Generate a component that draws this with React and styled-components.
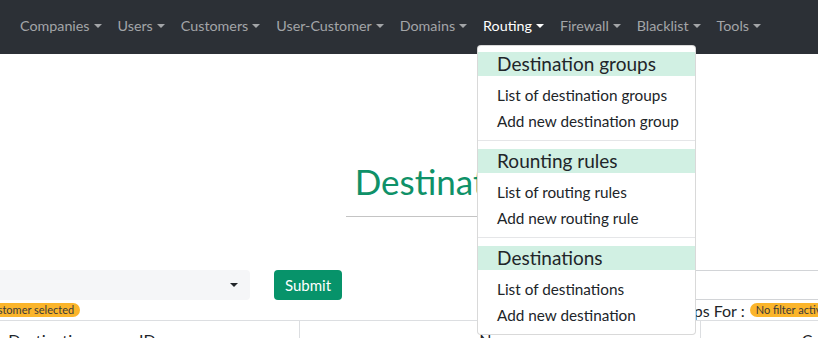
import React from 'react'
import styled, { createGlobalStyle } from 'styled-components'

const GlobalStyle = createGlobalStyle`
  body {
    margin: 0;
    background: #fff;
    font-family: Lato, "Open Sans", sans-serif;
    color: #212529;
    overflow: hidden;
  }
`

const Navbar = styled.nav`
  height: 54px;
  background: #2c3036;
  display: flex;
  align-items: flex-start;
  padding: 0 12px;
`

const NavItem = styled.div`
  position: relative;
`

const NavLink = styled.a`
  display: flex;
  align-items: center;
  height: 50px;
  padding: 0 8px;
  font-size: 14.3px;
  white-space: nowrap;
  color: ${p => (p.$active ? '#ffffff' : '#a3a5a8')};
  text-decoration: none;
  cursor: pointer;

  &::after {
    content: '';
    display: inline-block;
    margin-left: 4px;
    margin-top: 2px;
    border-top: 4px solid currentColor;
    border-left: 4px solid transparent;
    border-right: 4px solid transparent;
  }
`

const Menu = styled.div`
  position: absolute;
  top: 45px;
  left: 2px;
  width: 217px;
  background: #fff;
  border: 1px solid rgba(0, 0, 0, 0.15);
  border-radius: 4px;
  padding: 6px 0;
  z-index: 10;
`

const MenuHeader = styled.div`
  background: #d1f0e3;
  height: 24px;
  line-height: 24px;
  padding-left: 19px;
  font-size: 19px;
  color: #212529;
  margin-bottom: 6px;
  white-space: nowrap;
`

const MenuItem = styled.a`
  display: block;
  height: 26px;
  line-height: 26px;
  padding-left: 19px;
  font-size: 15.3px;
  color: #212529;
  white-space: nowrap;
`

const Divider = styled.hr`
  border: 0;
  border-top: 1px solid #e5e6e8;
  margin: 6px 0 8px;
`

const Content = styled.main`
  margin-left: -135px;
  width: 1272px;
`

const TitleWrap = styled.div`
  padding-top: 104px;
  text-align: center;
`

const Title = styled.h1`
  display: inline-block;
  margin: 0;
  padding: 0 9px 12px;
  font-size: 35px;
  font-weight: 400;
  line-height: 46px;
  color: #0f9168;
  border-bottom: 1px solid #c4c4c4;
`

const FormRow = styled.div`
  display: flex;
  align-items: center;
  margin-top: 53px;
  padding-left: 98px;
  height: 30px;
`

const Select = styled.div`
  width: 287px;
  height: 30px;
  background: #f5f6f8;
  border-radius: 4px;
  display: flex;
  align-items: center;
  justify-content: flex-end;
  padding-right: 12px;
  box-sizing: border-box;

  &::after {
    content: '';
    border-top: 4px solid #212529;
    border-left: 4px solid transparent;
    border-right: 4px solid transparent;
  }
`

const Button = styled.button`
  margin-left: 24px;
  width: 68px;
  height: 30px;
  border: 0;
  border-radius: 4px;
  background: #07936a;
  color: #fff;
  font-family: inherit;
  font-size: 15px;
`

const Search = styled.div`
  margin-left: 218px;
  flex: 1;
  height: 30px;
  box-sizing: border-box;
  border-top: 1px solid #d2d4d7;
  border-bottom: 1px solid #d2d4d7;
`

const InfoRow = styled.div`
  display: flex;
  align-items: center;
  justify-content: space-between;
  padding-left: 98px;
  height: 20px;
`

const Badge = styled.span`
  display: inline-block;
  background: #fbb52b;
  color: #3a3a3a;
  font-size: 11px;
  line-height: 14px;
  padding: 0 6px;
  border-radius: 7px;
`

const FilterText = styled.div`
  font-size: 16px;
  display: flex;
  align-items: center;
  gap: 5px;
  padding-right: 304px;
`

const Table = styled.table`
  border-collapse: collapse;
  width: 100%;
  table-layout: fixed;
`

const Th = styled.th`
  font-weight: 400;
  font-size: 16px;
  text-align: center;
  border-top: 1px solid #dcdee1;
  border-right: 1px solid #dcdee1;
  padding: 9px 0;
  width: ${p => p.$w}px;
`

const menuSections = [
  { title: 'Destination groups', items: ['List of destination groups', 'Add new destination group'] },
  { title: 'Rounting rules', items: ['List of routing rules', 'Add new routing rule'] },
  { title: 'Destinations', items: ['List of destinations', 'Add new destination'] },
]

const navItems = ['Companies', 'Users', 'Customers', 'User-Customer', 'Domains', 'Routing', 'Firewall', 'Blacklist', 'Tools']

function RoutingMenu() {
  return (
    <Menu>
      {menuSections.map((s, i) => (
        <React.Fragment key={s.title}>
          {i > 0 && <Divider />}
          <MenuHeader>{s.title}</MenuHeader>
          {s.items.map(it => (
            <MenuItem key={it}>{it}</MenuItem>
          ))}
        </React.Fragment>
      ))}
    </Menu>
  )
}

export default function App() {
  return (
    <>
      <GlobalStyle />
      <Navbar>
        {navItems.map(n => (
          <NavItem key={n}>
            <NavLink $active={n === 'Routing'}>{n}</NavLink>
            {n === 'Routing' && <RoutingMenu />}
          </NavItem>
        ))}
      </Navbar>
      <Content>
        <TitleWrap>
          <Title>Destination groups</Title>
        </TitleWrap>
        <FormRow>
          <Select />
          <Button>Submit</Button>
          <Search />
        </FormRow>
        <InfoRow>
          <Badge>No customer selected</Badge>
          <FilterText>
            Destination groups For : <Badge>No filter active</Badge>
          </FilterText>
        </InfoRow>
        <Table>
          <thead>
            <tr>
              <Th $w={434}>Destination group ID</Th>
              <Th $w={400}>Name</Th>
              <Th $w={270}>Customer</Th>
              <Th>Actions</Th>
            </tr>
          </thead>
        </Table>
      </Content>
    </>
  )
}
